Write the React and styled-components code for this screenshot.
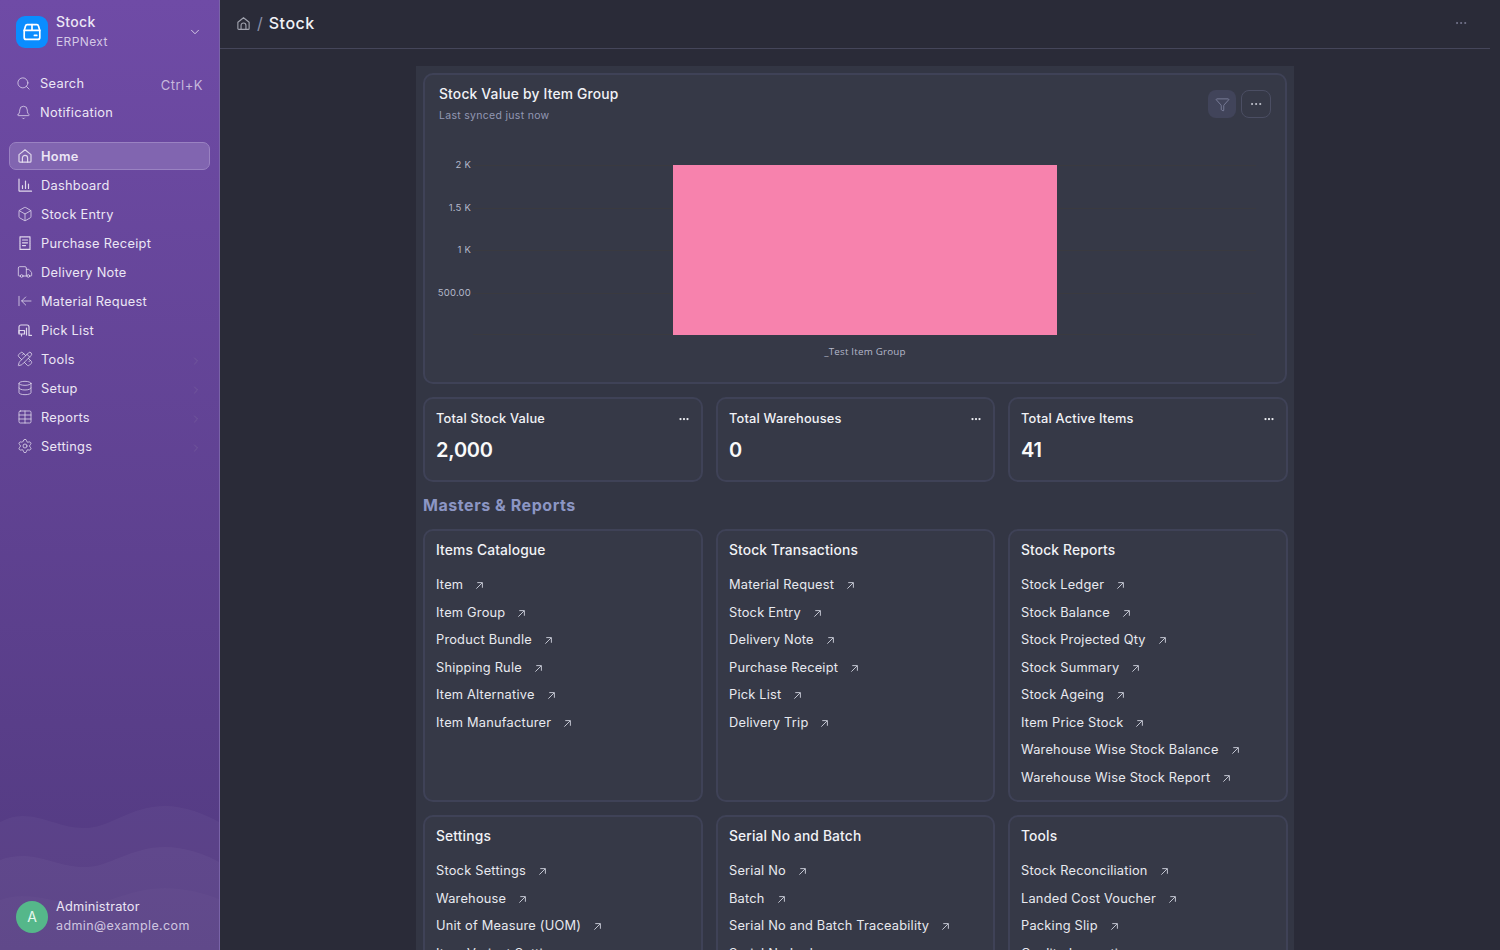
import React from 'react'
import styled, { createGlobalStyle } from 'styled-components'
import { Search, Bell, ChevronDown, ChevronRight, Box, Truck, ArrowLeftToLine, PencilRuler, Database, Table, Settings, Ellipsis, Funnel } from 'lucide-react'

const Global = createGlobalStyle`
html, body { margin: 0; height: 100%; overflow: hidden; background: #2a2b38; }
* { box-sizing: border-box; }
body { font-family: Inter, "Liberation Sans", sans-serif; }
`
const Shell = styled.div`
display: flex;
width: 1500px;
height: 950px;
overflow: hidden;
`
const Sidebar = styled.aside`
position: relative;
width: 220px;
flex: none;
height: 950px;
display: flex;
flex-direction: column;
padding: 0 9px;
background: linear-gradient(180deg, #6f4ba6 0%, #523a80 100%);
border-right: 1px solid #7a64a8;
overflow: hidden;
`
const Waves = styled.svg`
position: absolute;
left: 0;
bottom: 0;
width: 219px;
height: 146px;
`
const Brand = styled.div`
display: flex;
align-items: center;
gap: 8px;
margin-top: 16px;
padding: 0 7px;
height: 32px;
flex: none;
`
const BrandIcon = styled.div`
width: 32px;
height: 32px;
border-radius: 9px;
background: #0a8dff;
display: flex;
align-items: center;
justify-content: center;
`
const BrandText = styled.div`
flex: 1;
display: flex;
flex-direction: column;
gap: 4px;
margin-top: -3px;
`
const BrandName = styled.div`
font-size: 14px;
line-height: 17px;
font-weight: 500;
color: #ece6f5;
letter-spacing: 0.3px;
`
const BrandSub = styled.div`
font-size: 12px;
line-height: 15px;
color: #d4c8e6;
letter-spacing: 0.4px;
`
const BrandChevron = styled(ChevronDown)`
margin-right: 1px;
color: #fff;
`
const QuickList = styled.div`
display: flex;
flex-direction: column;
gap: 5px;
margin-top: 23px;
padding: 0 7px;
`
const Quick = styled.div`
height: 24px;
display: flex;
align-items: center;
gap: 9px;
font-size: 12.8px;
color: #ece6f5;
letter-spacing: 0.3px;
svg { color: #e4dcf0; flex: none; }
`
const Shortcut = styled.span`
margin-left: auto;
margin-top: 3px;
font-size: 13px;
color: #c6b8dc;
letter-spacing: 0.5px;
`
const Nav = styled.nav`
display: flex;
flex-direction: column;
gap: 1px;
margin-top: 18px;
`
const NavItem = styled.div`
height: 28px;
display: flex;
align-items: center;
gap: 8px;
padding: 0 7px;
border-radius: 7px;
font-size: 12.8px;
color: #ece6f5;
letter-spacing: 0.28px;
font-weight: ${p => (p.$active ? 600 : 400)};
background: ${p => (p.$active ? '#8165b0' : 'transparent')};
border: 1px solid ${p => (p.$active ? '#9a82c2' : 'transparent')};
svg { flex: none; color: #e0d8ec; }
`
const NavArrow = styled(ChevronRight)`
margin-left: auto;
margin-top: 3px;
margin-right: 0;
&& { color: #7e6aa0; }
`
const UserRow = styled.div`
position: absolute;
left: 16px;
bottom: 16px;
display: flex;
align-items: center;
gap: 8px;
`
const Avatar = styled.div`
width: 32px;
height: 32px;
border-radius: 50%;
background: #55b78a;
color: #e6f8ee;
font-size: 14px;
display: flex;
align-items: center;
justify-content: center;
`
const UserText = styled.div`
display: flex;
flex-direction: column;
gap: 3px;
`
const UserName = styled.div`
font-size: 12.8px;
line-height: 16px;
color: #ece6f5;
letter-spacing: 0.2px;
`
const UserMail = styled.div`
font-size: 12.5px;
line-height: 16px;
color: #d0c6e0;
letter-spacing: 0.4px;
`
const Main = styled.main`
flex: 1;
min-width: 0;
padding-right: 10px;
display: flex;
flex-direction: column;
`
const Header = styled.header`
height: 49px;
flex: none;
display: flex;
align-items: center;
padding: 0 22px 1px 16px;
border-bottom: 1px solid #45465a;
`
const Crumbs = styled.div`
display: flex;
align-items: center;
gap: 6px;
margin-top: -2px;
`
const CrumbHome = styled.span`
display: flex;
color: #a0a2ae;
margin-top: 2px;
`
const Slash = styled.span`
color: #8b90a8;
font-size: 16px;
`
const Crumb = styled.span`
color: #f1f2f6;
font-size: 16px;
font-weight: 500;
letter-spacing: 0.5px;
`
const HeaderMore = styled(Ellipsis)`
margin-left: auto;
margin-top: -2px;
color: #7f8199;
`
const Page = styled.div`
width: 878px;
margin: 17px 0 0 196px;
padding: 7px;
background: #333644;
`
const Card = styled.section`
background: #363947;
border: 2px solid #3f4257;
border-radius: 10px;
`
const ChartCard = styled(Card)`
height: 311px;
padding: 11px 14px 0;
display: flex;
flex-direction: column;
`
const ChartHead = styled.div`
display: flex;
justify-content: space-between;
`
const ChartTitle = styled.div`
font-size: 13.8px;
line-height: 17px;
font-weight: 500;
color: #f1f2f6;
letter-spacing: 0.2px;
`
const ChartSub = styled.div`
font-size: 10.5px;
line-height: 13px;
margin-top: 6px;
color: #9398b4;
letter-spacing: 0.3px;
`
const ChartTools = styled.div`
display: flex;
gap: 5px;
margin-top: 4px;
`
const ToolButton = styled.div`
width: ${p => (p.$outline ? 30 : 28)}px;
height: 28px;
border-radius: 8px;
display: flex;
align-items: center;
justify-content: center;
color: ${p => (p.$outline ? '#d8dae4' : '#8f93b2')};
background: ${p => (p.$outline ? 'transparent' : '#41445a')};
border: 1px solid ${p => (p.$outline ? '#4b4e63' : 'transparent')};
`
const Plot = styled.div`
flex: 1;
display: grid;
grid-template-columns: 32px 1fr;
column-gap: 2px;
margin-top: 18px;
`
const YAxis = styled.div`
display: flex;
flex-direction: column;
padding-top: 19px;
gap: 30px;
align-items: flex-end;
`
const YLabel = styled.div`
font-size: 9.5px;
line-height: 12.5px;
color: #b4b8ca;
letter-spacing: 0.2px;
white-space: nowrap;
`
const PlotArea = styled.div`
position: relative;
height: 199px;
`
const Grid = styled.div`
position: absolute;
left: 0;
right: 15px;
top: ${p => p.$top}px;
border-top: 1px solid #3a3a40;
`
const Bar = styled.div`
position: absolute;
left: 200px;
top: 24.5px;
width: 384px;
height: 170px;
background: #f782ad;
`
const XLabel = styled.div`
position: absolute;
left: 200px;
width: 384px;
top: 205px;
text-align: center;
font-family: "Open Sans", Inter, sans-serif;
font-size: 9.8px;
line-height: 13px;
color: #b4b8ca;
letter-spacing: 0.2px;
`
const Row3 = styled.div`
display: grid;
grid-template-columns: 280px 279px 280px;
column-gap: 13px;
margin-top: ${p => p.$mt || 0}px;
`
const StatCard = styled(Card)`
height: 85px;
padding: 12px 11px 0 11px;
`
const StatHead = styled.div`
display: flex;
justify-content: space-between;
align-items: center;
font-size: 12.8px;
line-height: 16px;
font-weight: 500;
color: #f1f2f6;
letter-spacing: 0.2px;
svg { color: #f1f2f6; }
`
const StatValue = styled.div`
margin-top: 10px;
font-size: 20px;
line-height: 27px;
font-weight: 600;
color: #fafafa;
letter-spacing: -0.2px;
`
const SectionTitle = styled.h2`
margin: 13px 0 14px;
font-size: 16px;
line-height: 20px;
font-weight: 700;
color: #8c96c4;
letter-spacing: 0.55px;
`
const ListCard = styled(Card)`
height: 273px;
padding: 11px 12px 0 11px;
`
const ListTitle = styled.h3`
margin: 0 0 12px;
font-size: 13.8px;
line-height: 17px;
font-weight: 500;
color: #f1f2f6;
letter-spacing: 0.15px;
`
const LinkRow = styled.a`
display: flex;
align-items: center;
gap: 12px;
height: 27.5px;
font-size: 12.8px;
color: #e8e9ef;
letter-spacing: 0.22px;
white-space: nowrap;
svg { color: #c4c6d2; margin-top: 2px; flex: none; }
`

const HomeIcon = ({ size = 16 }) => (
  <svg width={size} height={size} viewBox="0 0 16 16" fill="none" stroke="currentColor" strokeWidth="1.2" strokeLinecap="round" strokeLinejoin="round">
    <path d="M2 6.6 8 1.8l6 4.8v6.6a1 1 0 0 1-1 1H3a1 1 0 0 1-1-1z" />
    <path d="M5.4 14.2V10a2.6 2.6 0 0 1 5.2 0v4.2" />
  </svg>
)
const ChartIcon = () => (
  <svg width="16" height="16" viewBox="0 0 16 16" fill="none" stroke="currentColor" strokeWidth="1.2" strokeLinecap="round">
    <path d="M2 2v11.5a.7.7 0 0 0 .7.7H14.5" />
    <path d="M5.5 8.5v3M8.5 4v7.5M11.5 7v4.5" />
  </svg>
)
const ReceiptIcon = () => (
  <svg width="16" height="16" viewBox="0 0 16 16" fill="none" stroke="currentColor" strokeWidth="1.2" strokeLinecap="round" strokeLinejoin="round">
    <path d="M3 1.8h10v12.6H3z" strokeDasharray="1.2 0.6" />
    <path d="M5.5 5h5M5.5 7.8h5M5.5 10.6h3" />
  </svg>
)
const PickIcon = () => (
  <svg width="16" height="16" viewBox="0 0 16 16" fill="none" stroke="currentColor" strokeWidth="1.2" strokeLinecap="round" strokeLinejoin="round">
    <path d="M2 11V5a2 2 0 0 1 2-2h6a2 2 0 0 1 2 2v8.4h2.5" />
    <path d="M2 8.5h5.5v3.5H2zM4.5 12v2M9.5 6v7" />
  </svg>
)
const BoxLogo = () => (
  <svg width="18" height="18" viewBox="0 0 18 18" fill="none" stroke="#fff" strokeWidth="1.7" strokeLinejoin="round" strokeLinecap="round">
    <path d="M1.2 7.4 2.6 2.8A1.6 1.6 0 0 1 4.1 1.6h9.8a1.6 1.6 0 0 1 1.5 1.2l1.4 4.6v7a2 2 0 0 1-2 2H3.2a2 2 0 0 1-2-2z" />
    <path d="M1.2 7.4h15.6M9 1.6v5.8" />
    <path d="M11.4 12.4h2.4" />
  </svg>
)
const LinkArrow = () => (
  <svg width="9" height="9" viewBox="0 0 10 10" fill="none" stroke="currentColor" strokeWidth="1.1">
    <path d="M1.5 8.5 8 2M2.5 1.8h5.7v5.7" />
  </svg>
)

const NAV = [
  { label: 'Home', icon: <HomeIcon />, active: true },
  { label: 'Dashboard', icon: <ChartIcon /> },
  { label: 'Stock Entry', icon: <Box size={16} strokeWidth={1.2} /> },
  { label: 'Purchase Receipt', icon: <ReceiptIcon /> },
  { label: 'Delivery Note', icon: <Truck size={16} strokeWidth={1.2} /> },
  { label: 'Material Request', icon: <ArrowLeftToLine size={16} strokeWidth={1.2} /> },
  { label: 'Pick List', icon: <PickIcon /> },
  { label: 'Tools', icon: <PencilRuler size={16} strokeWidth={1.2} />, more: true },
  { label: 'Setup', icon: <Database size={16} strokeWidth={1.2} />, more: true },
  { label: 'Reports', icon: <Table size={16} strokeWidth={1.2} />, more: true },
  { label: 'Settings', icon: <Settings size={16} strokeWidth={1.2} />, more: true },
]

const STATS = [
  { title: 'Total Stock Value', value: '2,000' },
  { title: 'Total Warehouses', value: '0' },
  { title: 'Total Active Items', value: '41' },
]

const LISTS_A = [
  { title: 'Items Catalogue', links: ['Item', 'Item Group', 'Product Bundle', 'Shipping Rule', 'Item Alternative', 'Item Manufacturer'] },
  { title: 'Stock Transactions', links: ['Material Request', 'Stock Entry', 'Delivery Note', 'Purchase Receipt', 'Pick List', 'Delivery Trip'] },
  { title: 'Stock Reports', links: ['Stock Ledger', 'Stock Balance', 'Stock Projected Qty', 'Stock Summary', 'Stock Ageing', 'Item Price Stock', 'Warehouse Wise Stock Balance', 'Warehouse Wise Stock Report'] },
]
const LISTS_B = [
  { title: 'Settings', links: ['Stock Settings', 'Warehouse', 'Unit of Measure (UOM)', 'Item Variant Settings'] },
  { title: 'Serial No and Batch', links: ['Serial No', 'Batch', 'Serial No and Batch Traceability', 'Serial No Ledger'] },
  { title: 'Tools', links: ['Stock Reconciliation', 'Landed Cost Voucher', 'Packing Slip', 'Quality Inspection'] },
]

const ListGroup = ({ lists, mt }) => (
  <Row3 $mt={mt}>
    {lists.map(list => (
      <ListCard key={list.title}>
        <ListTitle>{list.title}</ListTitle>
        {list.links.map(link => (
          <LinkRow key={link}>
            {link}
            <LinkArrow />
          </LinkRow>
        ))}
      </ListCard>
    ))}
  </Row3>
)

const App = () => {
  return (
    <Shell>
      <Global />
      <Sidebar>
        <Waves viewBox="0 0 219 146" preserveAspectRatio="none">
          <path d="M0 18C8 14 14 12 22 12 45 12 60 24 85 24 110 24 130 2 165 2 185 2 205 10 219 18V146H0Z" fill="#fff" fillOpacity="0.035" />
          <path d="M0 56C8 53 14 52 22 52 45 52 60 63 85 63 110 63 130 43 165 43 185 43 205 50 219 58V146H0Z" fill="#fff" fillOpacity="0.035" />
          <path d="M0 96C8 93 14 92 22 92 45 92 60 100 85 100 110 100 130 84 165 84 185 84 205 89 219 95V146H0Z" fill="#fff" fillOpacity="0.02" />
        </Waves>
        <Brand>
          <BrandIcon><BoxLogo /></BrandIcon>
          <BrandText>
            <BrandName>Stock</BrandName>
            <BrandSub>ERPNext</BrandSub>
          </BrandText>
          <BrandChevron size={14} strokeWidth={1.2} />
        </Brand>
        <QuickList>
          <Quick><Search size={15} strokeWidth={1.2} />Search<Shortcut>Ctrl+K</Shortcut></Quick>
          <Quick><Bell size={15} strokeWidth={1.2} />Notification</Quick>
        </QuickList>
        <Nav>
          {NAV.map(item => (
            <NavItem key={item.label} $active={item.active}>
              {item.icon}
              {item.label}
              {item.more && <NavArrow size={12} strokeWidth={1} />}
            </NavItem>
          ))}
        </Nav>
        <UserRow>
          <Avatar>A</Avatar>
          <UserText>
            <UserName>Administrator</UserName>
            <UserMail>admin@example.com</UserMail>
          </UserText>
        </UserRow>
      </Sidebar>
      <Main>
        <Header>
          <Crumbs>
            <CrumbHome><HomeIcon size={15} /></CrumbHome>
            <Slash>/</Slash>
            <Crumb>Stock</Crumb>
          </Crumbs>
          <HeaderMore size={14} strokeWidth={1.4} />
        </Header>
        <Page>
          <ChartCard>
            <ChartHead>
              <div>
                <ChartTitle>Stock Value by Item Group</ChartTitle>
                <ChartSub>Last synced just now</ChartSub>
              </div>
              <ChartTools>
                <ToolButton><Funnel size={15} strokeWidth={1.1} /></ToolButton>
                <ToolButton $outline><Ellipsis size={14} strokeWidth={1.4} /></ToolButton>
              </ChartTools>
            </ChartHead>
            <Plot>
              <YAxis>
                <YLabel>2 K</YLabel>
                <YLabel>1.5 K</YLabel>
                <YLabel>1 K</YLabel>
                <YLabel>500.00</YLabel>
              </YAxis>
              <PlotArea>
                <Grid $top={25} />
                <Grid $top={68} />
                <Grid $top={110} />
                <Grid $top={153} />
                <Grid $top={194} />
                <Bar />
                <XLabel>_Test Item Group</XLabel>
              </PlotArea>
            </Plot>
          </ChartCard>
          <Row3 $mt={13}>
            {STATS.map(stat => (
              <StatCard key={stat.title}>
                <StatHead>
                  {stat.title}
                  <Ellipsis size={12} strokeWidth={2.5} />
                </StatHead>
                <StatValue>{stat.value}</StatValue>
              </StatCard>
            ))}
          </Row3>
          <SectionTitle>Masters &amp; Reports</SectionTitle>
          <ListGroup lists={LISTS_A} />
          <ListGroup lists={LISTS_B} mt={13} />
        </Page>
      </Main>
    </Shell>
  )
}

export default App
